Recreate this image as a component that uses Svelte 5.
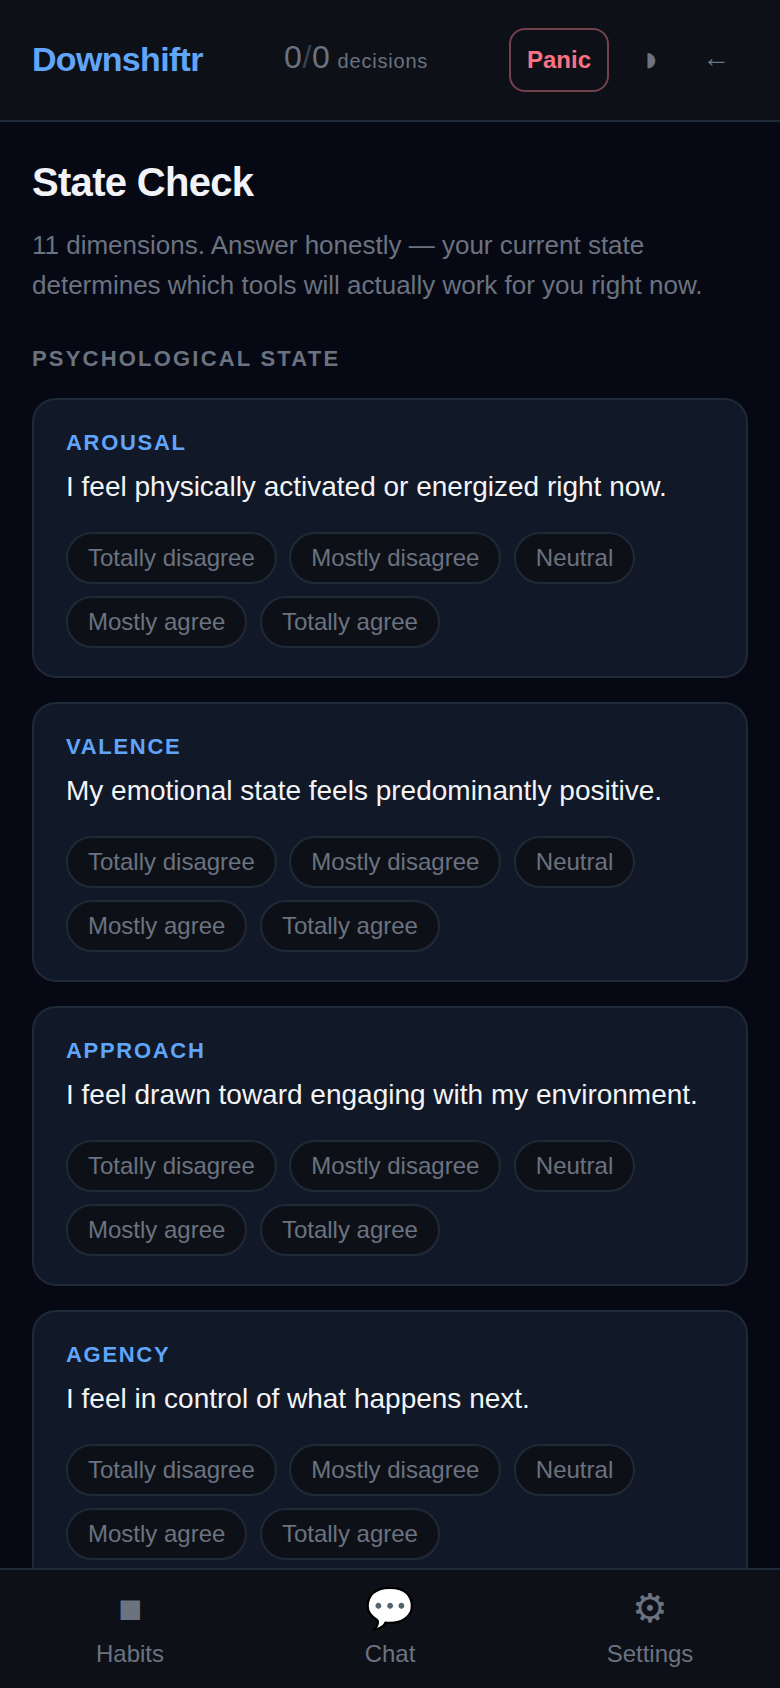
<script>
  const options = ['Totally disagree', 'Mostly disagree', 'Neutral', 'Mostly agree', 'Totally agree'];
  const questions = [
    { label: 'Arousal', text: 'I feel physically activated or energized right now.' },
    { label: 'Valence', text: 'My emotional state feels predominantly positive.' },
    { label: 'Approach', text: 'I feel drawn toward engaging with my environment.' },
    { label: 'Agency', text: 'I feel in control of what happens next.' }
  ];
  const tabs = [
    { icon: '■', name: 'Habits' },
    { icon: '💬', name: 'Chat' },
    { icon: '⚙', name: 'Settings' }
  ];
</script>

<div class="app">
  <header class="topbar">
    <div class="logo">Downshiftr</div>
    <div class="score"><span class="num">0</span><span class="slash">/</span><span class="num">0</span> <span class="unit">decisions</span></div>
    <div class="actions">
      <button class="panic">Panic</button>
      <button class="icon-btn moon">◗</button>
      <button class="icon-btn back">←</button>
    </div>
  </header>

  <main class="content">
    <h1>State Check</h1>
    <p class="intro">11 dimensions. Answer honestly — your current state determines which tools will actually work for you right now.</p>
    <h2>Psychological state</h2>
    {#each questions as q}
      <section class="card">
        <div class="label">{q.label}</div>
        <div class="question">{q.text}</div>
        <div class="chips">
          {#each options as opt}
            <button class="chip">{opt}</button>
          {/each}
        </div>
      </section>
    {/each}
  </main>

  <nav class="tabs">
    {#each tabs as tab}
      <button class="tab">
        <span class="tab-icon">{tab.icon}</span>
        <span class="tab-name">{tab.name}</span>
      </button>
    {/each}
  </nav>
</div>

<style>
  :global(body) {
    margin: 0;
    background: #060913;
    font-family: "Liberation Sans", Arial, sans-serif;
  }

  button {
    font-family: inherit;
    background: none;
    border: none;
    padding: 0;
  }

  .app {
    height: 100vh;
    display: flex;
    flex-direction: column;
    overflow: hidden;
  }

  .topbar {
    flex: none;
    height: 120px;
    display: flex;
    align-items: center;
    padding: 0 32px;
    background: #0d1117;
    border-bottom: 2px solid #1f2937;
  }

  .logo {
    width: 204px;
    margin-top: -2px;
    font-size: 34px;
    font-weight: 700;
    letter-spacing: -0.68px;
    color: #60a5fa;
  }

  .score {
    flex: 1;
    margin: -6px 0 0 48px;
    font-size: 24px;
    color: #6b7280;
    letter-spacing: 0.6px;
  }

  .num {
    font-size: 32px;
  }

  .slash {
    font-size: 32px;
    color: #374151;
  }

  .unit {
    font-size: 20px;
    letter-spacing: 0.8px;
  }

  .actions {
    display: flex;
    align-items: center;
  }

  .panic {
    width: 100px;
    height: 64px;
    border: 2px solid #74424e;
    border-radius: 16px;
    color: #fb7185;
    font-size: 24px;
    font-weight: 700;
  }

  .icon-btn {
    color: #6b7280;
    font-size: 28px;
    width: 64px;
    height: 64px;
  }

  .moon {
    margin: -2px 0 0 10px;
    font-size: 36px;
  }

  .back {
    margin: -4px 0 0 1px;
  }

  .content {
    flex: 1;
    min-height: 0;
    overflow: hidden;
    padding: 0 32px;
  }

  h1 {
    margin: 38px 0 0;
    font-size: 40px;
    font-weight: 700;
    letter-spacing: -0.7px;
    color: #f1f3f9;
  }

  .intro {
    margin: 20px 0 0;
    font-size: 26px;
    line-height: 40px;
    color: #6b7280;
  }

  h2 {
    margin: 41px 0 0;
    font-size: 22px;
    font-weight: 700;
    letter-spacing: 2.2px;
    text-transform: uppercase;
    color: #6b7280;
  }

  .card {
    margin-top: 24px;
    height: 280px;
    box-sizing: border-box;
    padding: 30px 32px;
    background: #111827;
    border: 2px solid #1f2937;
    border-radius: 24px;
  }

  .card:first-of-type {
    margin-top: 26px;
  }

  .label {
    font-size: 22px;
    font-weight: 700;
    letter-spacing: 1.7px;
    text-transform: uppercase;
    color: #60a5fa;
  }

  .question {
    margin-top: 11px;
    font-size: 28px;
    line-height: 40px;
    color: #f3f4f6;
  }

  .chips {
    margin-top: 25px;
    display: flex;
    flex-wrap: wrap;
    gap: 12px 12.5px;
  }

  .chip {
    height: 52px;
    padding: 0 20px;
    border: 2px solid #1f2937;
    border-radius: 26px;
    background: #0d1117;
    color: #6b7280;
    font-size: 24px;
  }

  .tabs {
    flex: none;
    height: 120px;
    box-sizing: border-box;
    display: grid;
    grid-template-columns: repeat(3, 1fr);
    background: #0d1117;
    border-top: 2px solid #1f2937;
  }

  .tab {
    display: flex;
    flex-direction: column;
    align-items: center;
    padding-top: 14px;
    color: #6b7280;
  }

  .tab-icon {
    font-size: 40px;
    line-height: 48px;
  }

  .tab-name {
    margin-top: 8px;
    font-size: 24px;
  }
</style>
